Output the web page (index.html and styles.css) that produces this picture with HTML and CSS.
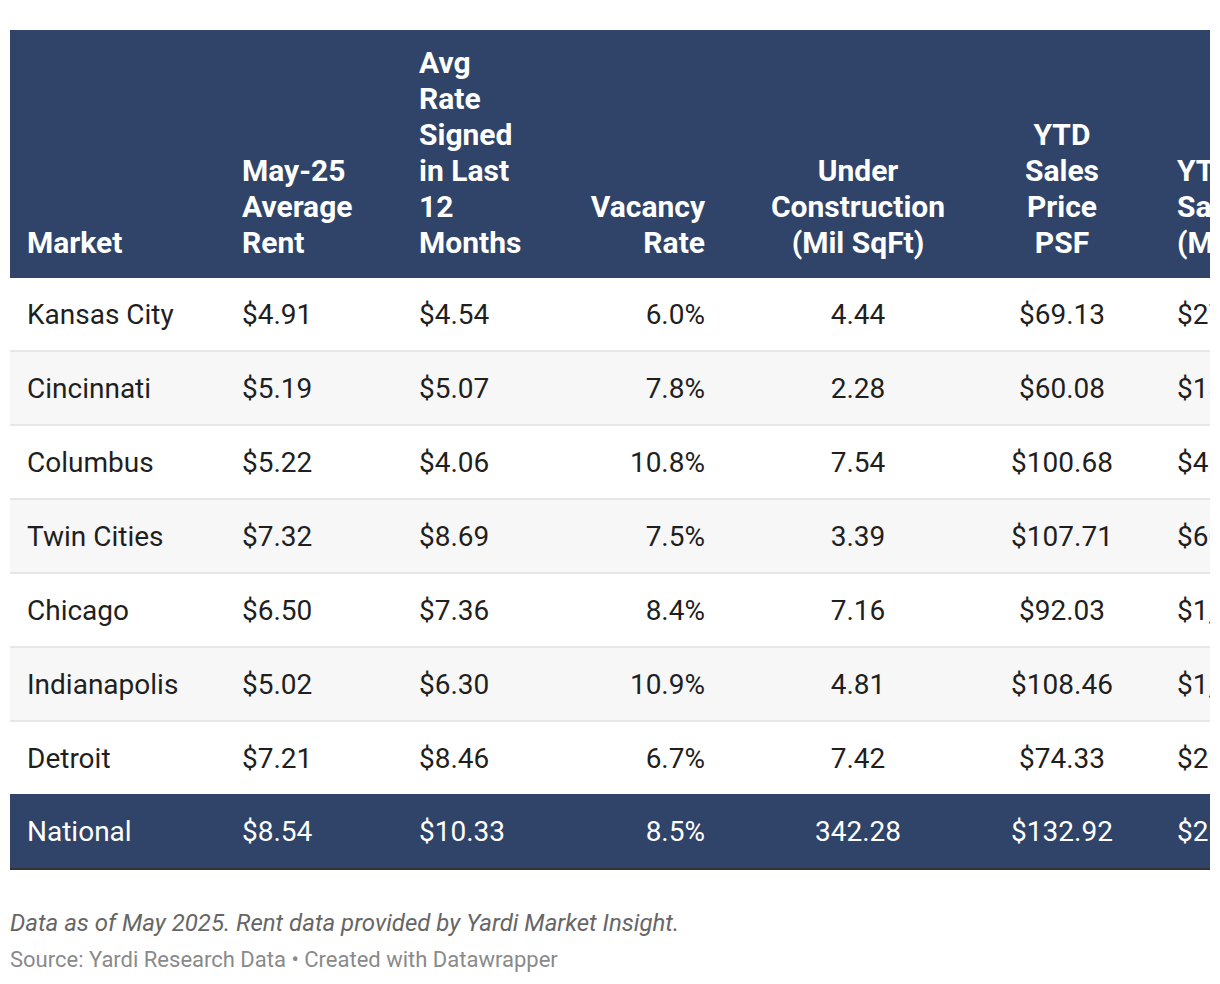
FILE: index.html
```html
<!DOCTYPE html>
<html lang="en">
<head>
<meta charset="utf-8">
<title>Midwest Industrial Markets</title>
<link rel="stylesheet" href="styles.css">
</head>
<body>
<div class="chart">
  <div class="table-wrap">
    <table class="data">
      <colgroup>
        <col class="c1"><col class="c2"><col class="c3"><col class="c4"><col class="c5"><col class="c6"><col class="c7">
      </colgroup>
      <thead>
        <tr>
          <th class="left">Market</th>
          <th class="left">May-25<br>Average<br>Rent</th>
          <th class="left">Avg<br>Rate<br>Signed<br>in Last<br>12<br>Months</th>
          <th class="right">Vacancy<br>Rate</th>
          <th class="center">Under<br>Construction<br>(Mil SqFt)</th>
          <th class="center">YTD<br>Sales<br>Price<br>PSF</th>
          <th class="left last">YTD<br>Sales<br>(Mil)</th>
        </tr>
      </thead>
      <tbody>
        <tr><td class="left">Kansas City</td><td class="left">$4.91</td><td class="left">$4.54</td><td class="right">6.0%</td><td class="center">4.44</td><td class="center">$69.13</td><td class="left last">$271</td></tr>
        <tr><td class="left">Cincinnati</td><td class="left">$5.19</td><td class="left">$5.07</td><td class="right">7.8%</td><td class="center">2.28</td><td class="center">$60.08</td><td class="left last">$184</td></tr>
        <tr><td class="left">Columbus</td><td class="left">$5.22</td><td class="left">$4.06</td><td class="right">10.8%</td><td class="center">7.54</td><td class="center">$100.68</td><td class="left last">$412</td></tr>
        <tr><td class="left">Twin Cities</td><td class="left">$7.32</td><td class="left">$8.69</td><td class="right">7.5%</td><td class="center">3.39</td><td class="center">$107.71</td><td class="left last">$603</td></tr>
        <tr><td class="left">Chicago</td><td class="left">$6.50</td><td class="left">$7.36</td><td class="right">8.4%</td><td class="center">7.16</td><td class="center">$92.03</td><td class="left last">$1,528</td></tr>
        <tr><td class="left">Indianapolis</td><td class="left">$5.02</td><td class="left">$6.30</td><td class="right">10.9%</td><td class="center">4.81</td><td class="center">$108.46</td><td class="left last">$1,041</td></tr>
        <tr class="pre-total"><td class="left">Detroit</td><td class="left">$7.21</td><td class="left">$8.46</td><td class="right">6.7%</td><td class="center">7.42</td><td class="center">$74.33</td><td class="left last">$288</td></tr>
        <tr class="total"><td class="left">National</td><td class="left">$8.54</td><td class="left">$10.33</td><td class="right">8.5%</td><td class="center">342.28</td><td class="center">$132.92</td><td class="left last">$26,812</td></tr>
      </tbody>
    </table>
  </div>
  <p class="notes">Data as of May 2025. Rent data provided by Yardi Market Insight.</p>
  <p class="source">Source: Yardi Research Data • Created with Datawrapper</p>
</div>
</body>
</html>
```
FILE: styles.css
```css
html, body {
  margin: 0;
  padding: 0;
  background: #ffffff;
}

body {
  font-family: Roboto, "Liberation Sans", Arial, sans-serif;
  color: #1f1f1f;
}

.chart {
  padding: 30px 10px 0 10px;
}

.table-wrap {
  width: 1200px;
  overflow: hidden;
}

.data {
  border-collapse: collapse;
  table-layout: fixed;
  width: 1400px;
}

.c1 { width: 215px; }
.c2 { width: 177px; }
.c3 { width: 169px; }
.c4 { width: 151px; }
.c5 { width: 272px; }
.c6 { width: 136px; }
.c7 { width: 280px; }

.data th,
.data td {
  padding: 0 17px;
  white-space: nowrap;
}

.data th.last,
.data td.last {
  padding-left: 47px;
}

.data thead th {
  background: #2f4468;
  color: #ffffff;
  font-weight: 700;
  font-size: 30px;
  line-height: 36px;
  vertical-align: bottom;
  padding-top: 15px;
  padding-bottom: 17px;
  height: 216px;
}

.left { text-align: left; }
.right { text-align: right; }
.center { text-align: center; }

.data tbody td {
  height: 71px;
  font-size: 28px;
  line-height: 36px;
  vertical-align: middle;
  padding-top: 1px;
  padding-bottom: 0;
  border-bottom: 2px solid #e6e6e6;
}

.data tbody tr:nth-child(even) td {
  background: #f7f7f7;
}

.data tbody tr.pre-total td {
  border-bottom: none;
}

.data tbody tr.total td {
  height: 73px;
  background: #2f4468;
  color: #ffffff;
  border-bottom: 2px solid #333333;
}

.notes {
  margin: 38px 0 0 0;
  font-size: 24px;
  line-height: 30px;
  font-style: italic;
  color: #666666;
}

.source {
  margin: 8px 0 0 0;
  font-size: 22px;
  line-height: 28px;
  color: #8a8a8a;
}
```
